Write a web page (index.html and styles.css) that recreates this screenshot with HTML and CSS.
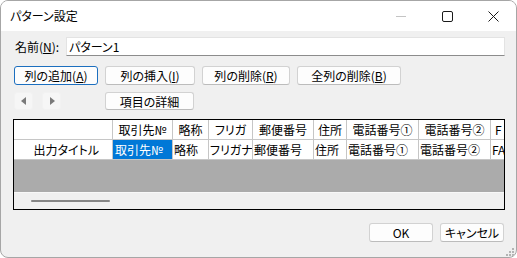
FILE: index.html
```html
<!DOCTYPE html>
<html>
<head>
  <meta charset="UTF-8">
  <title>パターン設定</title>
  <link rel="stylesheet" href="styles.css">
</head>
<body>
<div class="window">
  <div class="titlebar">
    <span class="title">パターン設定</span>
    <div class="controls">
      <div class="ctl">
        <svg width="10" height="10" viewBox="0 0 10 10"><path d="M0 5.5h10" stroke="#c4c4c4" stroke-width="1"/></svg>
      </div>
      <div class="ctl">
        <svg width="11" height="11" viewBox="0 0 11 11"><rect x="0.5" y="0.5" width="10" height="10" rx="1.5" fill="none" stroke="#1a1a1a" stroke-width="1"/></svg>
      </div>
      <div class="ctl">
        <svg width="11" height="11" viewBox="0 0 11 11"><path d="M0.5 0.5l10 10M10.5 0.5l-10 10" stroke="#1a1a1a" stroke-width="1"/></svg>
      </div>
    </div>
  </div>

  <div class="body">
    <div class="nameRow">
      <span class="nameLabel">名前(<u>N</u>):</span>
      <div class="nameInput">パターン1</div>
    </div>

    <div class="btnRow">
      <button class="btn focused w84">列の追加(<u>A</u>)</button>
      <button class="btn w90">列の挿入(<u>I</u>)</button>
      <button class="btn w88">列の削除(<u>R</u>)</button>
      <button class="btn w104">全列の削除(<u>B</u>)</button>
    </div>

    <div class="btnRow2">
      <button class="arrow">
        <svg width="6" height="8" viewBox="0 0 6 8"><path d="M5 0v8L0 4z" fill="#7a7a7a"/></svg>
      </button>
      <button class="arrow next">
        <svg width="6" height="8" viewBox="0 0 6 8"><path d="M1 0v8l5-4z" fill="#7a7a7a"/></svg>
      </button>
      <button class="btn w89 details">項目の詳細</button>
    </div>

    <div class="grid">
      <div class="row head">
        <div class="cell c0"></div>
        <div class="cell c1">取引先№</div>
        <div class="cell c2">略称</div>
        <div class="cell c3">フリガ</div>
        <div class="cell c4">郵便番号</div>
        <div class="cell c5">住所</div>
        <div class="cell c6">電話番号①</div>
        <div class="cell c7">電話番号②</div>
        <div class="cell c8">F</div>
      </div>
      <div class="row data">
        <div class="cell c0 rowTitle">出力タイトル</div>
        <div class="cell c1 selected">取引先№</div>
        <div class="cell c2">略称</div>
        <div class="cell c3">フリガナ</div>
        <div class="cell c4">郵便番号</div>
        <div class="cell c5">住所</div>
        <div class="cell c6">電話番号①</div>
        <div class="cell c7">電話番号②</div>
        <div class="cell c8">FA</div>
      </div>
      <div class="empty"></div>
      <div class="hscroll"><div class="thumb"></div></div>
    </div>

    <div class="footer">
      <button class="btn w64">OK</button>
      <button class="btn w64">キャンセル</button>
    </div>
  </div>

  <svg class="grip" width="10" height="10" viewBox="0 0 10 10">
    <rect x="7" y="1" width="2" height="2" fill="#b4b4b4"/>
    <rect x="4" y="4" width="2" height="2" fill="#b4b4b4"/>
    <rect x="7" y="4" width="2" height="2" fill="#b4b4b4"/>
    <rect x="1" y="7" width="2" height="2" fill="#b4b4b4"/>
    <rect x="4" y="7" width="2" height="2" fill="#b4b4b4"/>
    <rect x="7" y="7" width="2" height="2" fill="#b4b4b4"/>
  </svg>
</div>
</body>
</html>
```

FILE: styles.css
```css
body {
  margin: 0;
  background: #fff;
  font-family: "Noto Sans CJK JP", sans-serif;
  font-size: 12px;
  font-feature-settings: "palt";
  color: #000;
}
.window {
  position: relative;
  width: 517px;
  height: 258px;
  box-sizing: border-box;
  border: 1px solid #a6a6a6;
  border-radius: 8px;
  overflow: hidden;
  display: flex;
  flex-direction: column;
  background: #f0f0f0;
}
.titlebar {
  height: 30px;
  flex: none;
  background: #fff;
  display: flex;
  align-items: center;
  padding-left: 9px;
}
.title {
  line-height: 30px;
}
.controls {
  margin-left: auto;
  display: flex;
}
.ctl {
  width: 46px;
  height: 30px;
  display: flex;
  align-items: center;
  justify-content: center;
}
.body {
  flex: 1;
  padding: 0 11px 0 12px;
}
.nameRow {
  display: flex;
  align-items: center;
  margin-top: 6px;
  height: 19px;
}
.nameLabel {
  width: 51px;
  padding-left: 2px;
  flex: none;
}
.nameInput {
  box-sizing: border-box;
  width: 439px;
  height: 19px;
  background: #fff;
  border: 1px solid #e3e3e3;
  border-bottom-color: #8c8c8c;
  padding-left: 2px;
  line-height: 17px;
}
.btn {
  box-sizing: border-box;
  height: 19px;
  padding: 0;
  border: 1px solid #d2d2d2;
  border-bottom-color: #bcbcbc;
  border-radius: 3px;
  background: #fdfdfd;
  font-family: inherit;
  font-size: 12px;
  font-feature-settings: "palt";
  line-height: 17px;
  color: #000;
  text-align: center;
}
.btn.focused {
  border-color: #1c6fbf;
}
.w84 { width: 84px; }
.w88 { width: 88px; }
.w89 { width: 89px; }
.w90 { width: 90px; }
.w104 { width: 104px; }
.w64 { width: 64px; }
.btnRow {
  display: flex;
  gap: 7px;
  margin-top: 10px;
  margin-left: 1px;
}
.btnRow2 {
  display: flex;
  margin-top: 7px;
  margin-left: 1px;
  height: 18px;
}
.btnRow2 .btn {
  height: 18px;
}
.arrow {
  box-sizing: border-box;
  width: 19px;
  height: 18px;
  padding: 0;
  border: 1px solid #f2f2f2;
  border-radius: 3px;
  background: #f6f6f6;
  display: flex;
  align-items: center;
  justify-content: center;
}
.arrow.next {
  margin-left: 9px;
}
.details {
  margin-left: 44px;
}
.grid {
  box-sizing: border-box;
  width: 492px;
  height: 91px;
  margin-top: 9px;
  border: 1px solid #000;
  background: #f0f0f0;
  display: flex;
  flex-direction: column;
  overflow: hidden;
}
.row {
  display: flex;
  flex: none;
  height: 20px;
}
.cell {
  flex: none;
  box-sizing: border-box;
  height: 20px;
  background: #fff;
  border-right: 1px solid #c6c6c6;
  border-bottom: 1px solid #c6c6c6;
  line-height: 19px;
  white-space: nowrap;
  overflow: hidden;
  padding-left: 2px;
}
.head .cell {
  text-align: center;
  padding-left: 0;
}
.data .cell {
  padding-left: 1px;
}
.c0 { width: 99px; }
.c1 { width: 60px; }
.c2 { width: 36px; }
.c3 { width: 44px; }
.c4 { width: 61px; }
.c5 { width: 33px; }
.c6 { width: 72px; }
.c7 { width: 72px; }
.c8 { width: 13px; border-right: 0; }
.head .c8 {
  text-align: left;
  padding-left: 4px;
}
.data .rowTitle {
  text-align: right;
  padding-right: 13px;
}
.data .selected {
  background: #0078d7;
  color: #fff;
  padding-left: 2px;
}
.empty {
  flex: none;
  height: 32px;
  background: #ababab;
}
.hscroll {
  flex: none;
  height: 16px;
  border-top: 1px solid #f8f8f8;
  background: #f0f0f0;
}
.thumb {
  width: 79px;
  height: 2px;
  margin: 7px 0 0 17px;
  background: #858585;
  border-radius: 1px;
}
.footer {
  display: flex;
  justify-content: flex-end;
  gap: 7px;
  margin-top: 13px;
  margin-right: 1px;
}
.grip {
  position: absolute;
  right: 1px;
  bottom: 0;
}
```
